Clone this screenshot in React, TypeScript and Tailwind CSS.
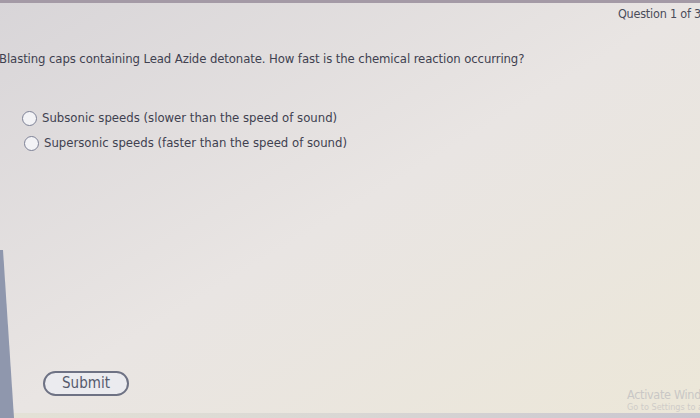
import React from "react";

const font = { fontFamily: '"DejaVu Sans Condensed", "DejaVu Sans", Verdana, sans-serif' };

function Radio() {
  return (
    <span className="inline-block w-[15px] h-[15px] rounded-full border-[1.5px] border-[#7d8196] bg-[#f3f3f6] shrink-0" />
  );
}

export default function App() {
  return (
    <div
      className="relative w-[700px] h-[418px] overflow-hidden bg-linear-to-br from-[#d8d5d8] via-[#e9e5e3] to-[#ece7d8] text-[#3f4150]"
      style={font}
    >
      <div className="h-[3px] bg-[#a49aa6]" />
      <div className="flex justify-end pt-[2px]">
        <span className="text-[12.5px] text-[#4a4c5a] tracking-[-0.2px] whitespace-nowrap -mr-[8px]">Question 1 of 35</span>
      </div>
      <div className="pt-[25px] -ml-[1px]">
        <p className="text-[13px] tracking-[-0.1px] whitespace-nowrap">
          Blasting caps containing Lead Azide detonate. How fast is the chemical reaction occurring?
        </p>
      </div>
      <div className="flex flex-col gap-[9px] pt-[42px] pl-[22px]">
        <label className="flex items-center gap-[5px] text-[13px] leading-[16px] whitespace-nowrap">
          <Radio />
          <span>Subsonic speeds (slower than the speed of sound)</span>
        </label>
        <label className="flex items-center gap-[5px] pl-[2px] text-[13px] leading-[16px] whitespace-nowrap">
          <Radio />
          <span>Supersonic speeds (faster than the speed of sound)</span>
        </label>
      </div>
      <div className="pt-[220px] pl-[43px]">
        <button className="w-[86px] h-[25px] rounded-full border-2 border-[#6e7284] bg-[#ebebef] text-[15px] text-[#555a6c] leading-none">
          Submit
        </button>
      </div>
      <div className="absolute left-[627px] top-[387px] text-[#c9c7c6] whitespace-nowrap">
        <div className="text-[12.5px] leading-[15px] tracking-[-0.3px]">Activate Windows</div>
        <div className="text-[9px] leading-[11px] text-[#cfccc8]">Go to Settings to activate Windows.</div>
      </div>
      <div className="absolute left-0 right-0 bottom-0 h-[5px] bg-linear-to-r from-[#e4e2d6] via-[#d9d7d4] to-[#c9c6cf]" />
      <div className="absolute left-0 top-[250px] w-[14px] h-[168px] bg-[#8f97ad] [clip-path:polygon(0_0,3px_0,100%_100%,0_100%)]" />
    </div>
  );
}
